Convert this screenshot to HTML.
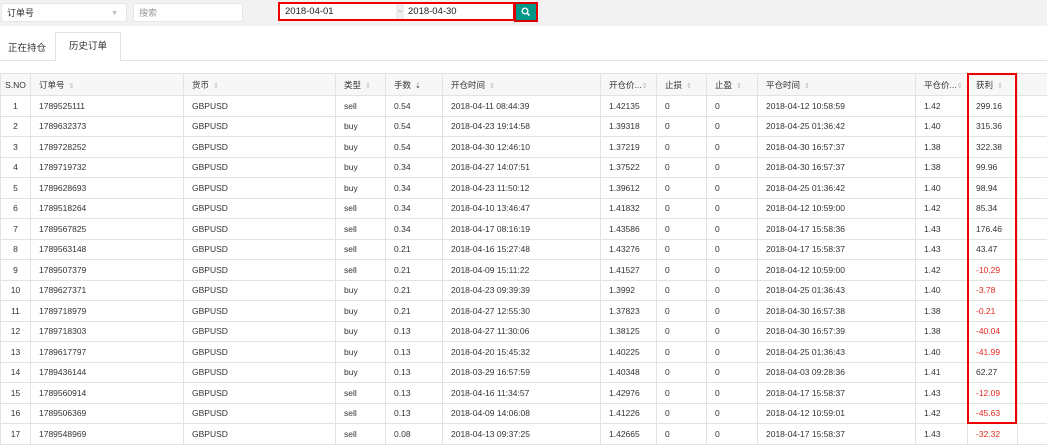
<!DOCTYPE html>
<html><head><meta charset="utf-8"><style>
body{margin:0;width:1047px;height:443px;overflow:hidden;background:#fff;font-family:"Liberation Sans","Noto Sans CJK SC",sans-serif;font-size:9px;color:#333;position:relative}
.top{position:absolute;left:0;top:0;width:1047px;height:26px;background:#f2f2f2}
.box{position:absolute;background:#fff;border:1px solid #e6e6e6;height:19px;line-height:19px;font-size:9px;box-sizing:border-box;padding-left:5px}
.tabs{position:absolute;top:60px;left:0;width:1047px;border-top:1px solid #e2e2e2}
table{position:absolute;left:0;top:73px;border-collapse:collapse;table-layout:fixed;width:1047px}
td,th{border:1px solid #e2e2e2;height:19.5px;padding:0 0 0 8px;text-align:left;font-weight:normal;white-space:nowrap;overflow:hidden;font-size:8.5px}
th{height:21px;background:#f7f7f7}
td:first-child,th:first-child{padding:0;text-align:center}
td:last-child,th:last-child{border-left-color:transparent;border-right:none}
.s{color:#bbb;font-size:7px;margin-left:4px}
.r{color:#e5281e}
</style></head><body>
<div class="top"></div>
<div class="box" style="left:1px;top:3px;width:126px">订单号<span style="position:absolute;right:8px;color:#bbb;font-size:7px">▼</span></div>
<div class="box" style="left:133px;top:3px;width:110px;color:#999">搜索</div>
<div style="position:absolute;left:278px;top:2px;width:237px;height:19px;border:2px solid #e00;box-sizing:border-box;background:#fff"></div>
<div style="position:absolute;left:285px;top:4px;line-height:15px;font-size:9.5px;color:#222">2018-04-01</div>
<div style="position:absolute;left:396px;top:4px;width:8px;height:15px;background:#eee;color:#999;font-size:8px;line-height:15px;text-align:center">~</div>
<div style="position:absolute;left:408px;top:4px;line-height:15px;font-size:9.5px;color:#222">2018-04-30</div>
<div style="position:absolute;left:514px;top:2px;width:24px;height:20px;background:#009688;border:2px solid #d00;box-sizing:border-box;color:#fff;font-size:10px;text-align:center;line-height:16px;font-weight:bold">
<svg width="10" height="10" viewBox="0 0 10 10" style="margin-top:3px"><circle cx="4" cy="4" r="2.8" fill="none" stroke="#fff" stroke-width="1.4"/><path d="M6 6L8.5 8.5" stroke="#fff" stroke-width="1.6"/></svg></div>
<div style="position:absolute;left:8px;top:40px;font-size:9.5px">正在持仓</div>
<div class="tabs"></div>
<div style="position:absolute;left:55px;top:32px;width:66px;height:29px;border:1px solid #e2e2e2;border-bottom:none;background:#fff;box-sizing:border-box;text-align:center;line-height:28px;font-size:9.5px">历史订单</div>
<table>
<colgroup><col style="width:30px"><col style="width:153px"><col style="width:152px"><col style="width:50px"><col style="width:57px"><col style="width:158px"><col style="width:56px"><col style="width:50px"><col style="width:51px"><col style="width:158px"><col style="width:52px"><col style="width:50px"><col style="width:30px"></colgroup>
<tr><th>S.NO</th><th>订单号<span class="s">⇕</span></th><th>货币<span class="s">⇕</span></th><th>类型<span class="s">⇕</span></th><th>手数<span class="s" style="color:#333">⇣</span></th><th>开仓时间<span class="s">⇕</span></th><th>开仓价...<span class="s" style="margin:0">⇕</span></th><th>止损<span class="s">⇕</span></th><th>止盈<span class="s">⇕</span></th><th>平仓时间<span class="s">⇕</span></th><th>平仓价...<span class="s" style="margin:0">⇕</span></th><th>获利<span class="s">⇕</span></th><th></th></tr>
<tr><td>1</td><td>1789525111</td><td>GBPUSD</td><td>sell</td><td>0.54</td><td>2018-04-11 08:44:39</td><td>1.42135</td><td>0</td><td>0</td><td>2018-04-12 10:58:59</td><td>1.42</td><td>299.16</td><td></td></tr>
<tr><td>2</td><td>1789632373</td><td>GBPUSD</td><td>buy</td><td>0.54</td><td>2018-04-23 19:14:58</td><td>1.39318</td><td>0</td><td>0</td><td>2018-04-25 01:36:42</td><td>1.40</td><td>315.36</td><td></td></tr>
<tr><td>3</td><td>1789728252</td><td>GBPUSD</td><td>buy</td><td>0.54</td><td>2018-04-30 12:46:10</td><td>1.37219</td><td>0</td><td>0</td><td>2018-04-30 16:57:37</td><td>1.38</td><td>322.38</td><td></td></tr>
<tr><td>4</td><td>1789719732</td><td>GBPUSD</td><td>buy</td><td>0.34</td><td>2018-04-27 14:07:51</td><td>1.37522</td><td>0</td><td>0</td><td>2018-04-30 16:57:37</td><td>1.38</td><td>99.96</td><td></td></tr>
<tr><td>5</td><td>1789628693</td><td>GBPUSD</td><td>buy</td><td>0.34</td><td>2018-04-23 11:50:12</td><td>1.39612</td><td>0</td><td>0</td><td>2018-04-25 01:36:42</td><td>1.40</td><td>98.94</td><td></td></tr>
<tr><td>6</td><td>1789518264</td><td>GBPUSD</td><td>sell</td><td>0.34</td><td>2018-04-10 13:46:47</td><td>1.41832</td><td>0</td><td>0</td><td>2018-04-12 10:59:00</td><td>1.42</td><td>85.34</td><td></td></tr>
<tr><td>7</td><td>1789567825</td><td>GBPUSD</td><td>sell</td><td>0.34</td><td>2018-04-17 08:16:19</td><td>1.43586</td><td>0</td><td>0</td><td>2018-04-17 15:58:36</td><td>1.43</td><td>176.46</td><td></td></tr>
<tr><td>8</td><td>1789563148</td><td>GBPUSD</td><td>sell</td><td>0.21</td><td>2018-04-16 15:27:48</td><td>1.43276</td><td>0</td><td>0</td><td>2018-04-17 15:58:37</td><td>1.43</td><td>43.47</td><td></td></tr>
<tr><td>9</td><td>1789507379</td><td>GBPUSD</td><td>sell</td><td>0.21</td><td>2018-04-09 15:11:22</td><td>1.41527</td><td>0</td><td>0</td><td>2018-04-12 10:59:00</td><td>1.42</td><td class="r">-10.29</td><td></td></tr>
<tr><td>10</td><td>1789627371</td><td>GBPUSD</td><td>buy</td><td>0.21</td><td>2018-04-23 09:39:39</td><td>1.3992</td><td>0</td><td>0</td><td>2018-04-25 01:36:43</td><td>1.40</td><td class="r">-3.78</td><td></td></tr>
<tr><td>11</td><td>1789718979</td><td>GBPUSD</td><td>buy</td><td>0.21</td><td>2018-04-27 12:55:30</td><td>1.37823</td><td>0</td><td>0</td><td>2018-04-30 16:57:38</td><td>1.38</td><td class="r">-0.21</td><td></td></tr>
<tr><td>12</td><td>1789718303</td><td>GBPUSD</td><td>buy</td><td>0.13</td><td>2018-04-27 11:30:06</td><td>1.38125</td><td>0</td><td>0</td><td>2018-04-30 16:57:39</td><td>1.38</td><td class="r">-40.04</td><td></td></tr>
<tr><td>13</td><td>1789617797</td><td>GBPUSD</td><td>buy</td><td>0.13</td><td>2018-04-20 15:45:32</td><td>1.40225</td><td>0</td><td>0</td><td>2018-04-25 01:36:43</td><td>1.40</td><td class="r">-41.99</td><td></td></tr>
<tr><td>14</td><td>1789436144</td><td>GBPUSD</td><td>buy</td><td>0.13</td><td>2018-03-29 16:57:59</td><td>1.40348</td><td>0</td><td>0</td><td>2018-04-03 09:28:36</td><td>1.41</td><td>62.27</td><td></td></tr>
<tr><td>15</td><td>1789560914</td><td>GBPUSD</td><td>sell</td><td>0.13</td><td>2018-04-16 11:34:57</td><td>1.42976</td><td>0</td><td>0</td><td>2018-04-17 15:58:37</td><td>1.43</td><td class="r">-12.09</td><td></td></tr>
<tr><td>16</td><td>1789506369</td><td>GBPUSD</td><td>sell</td><td>0.13</td><td>2018-04-09 14:06:08</td><td>1.41226</td><td>0</td><td>0</td><td>2018-04-12 10:59:01</td><td>1.42</td><td class="r">-45.63</td><td></td></tr>
<tr><td>17</td><td>1789548969</td><td>GBPUSD</td><td>sell</td><td>0.08</td><td>2018-04-13 09:37:25</td><td>1.42665</td><td>0</td><td>0</td><td>2018-04-17 15:58:37</td><td>1.43</td><td class="r">-32.32</td><td></td></tr>
</table>
<div style="position:absolute;left:967px;top:73px;width:50px;height:351px;border:2px solid #e00;box-sizing:border-box"></div>
</body></html>
